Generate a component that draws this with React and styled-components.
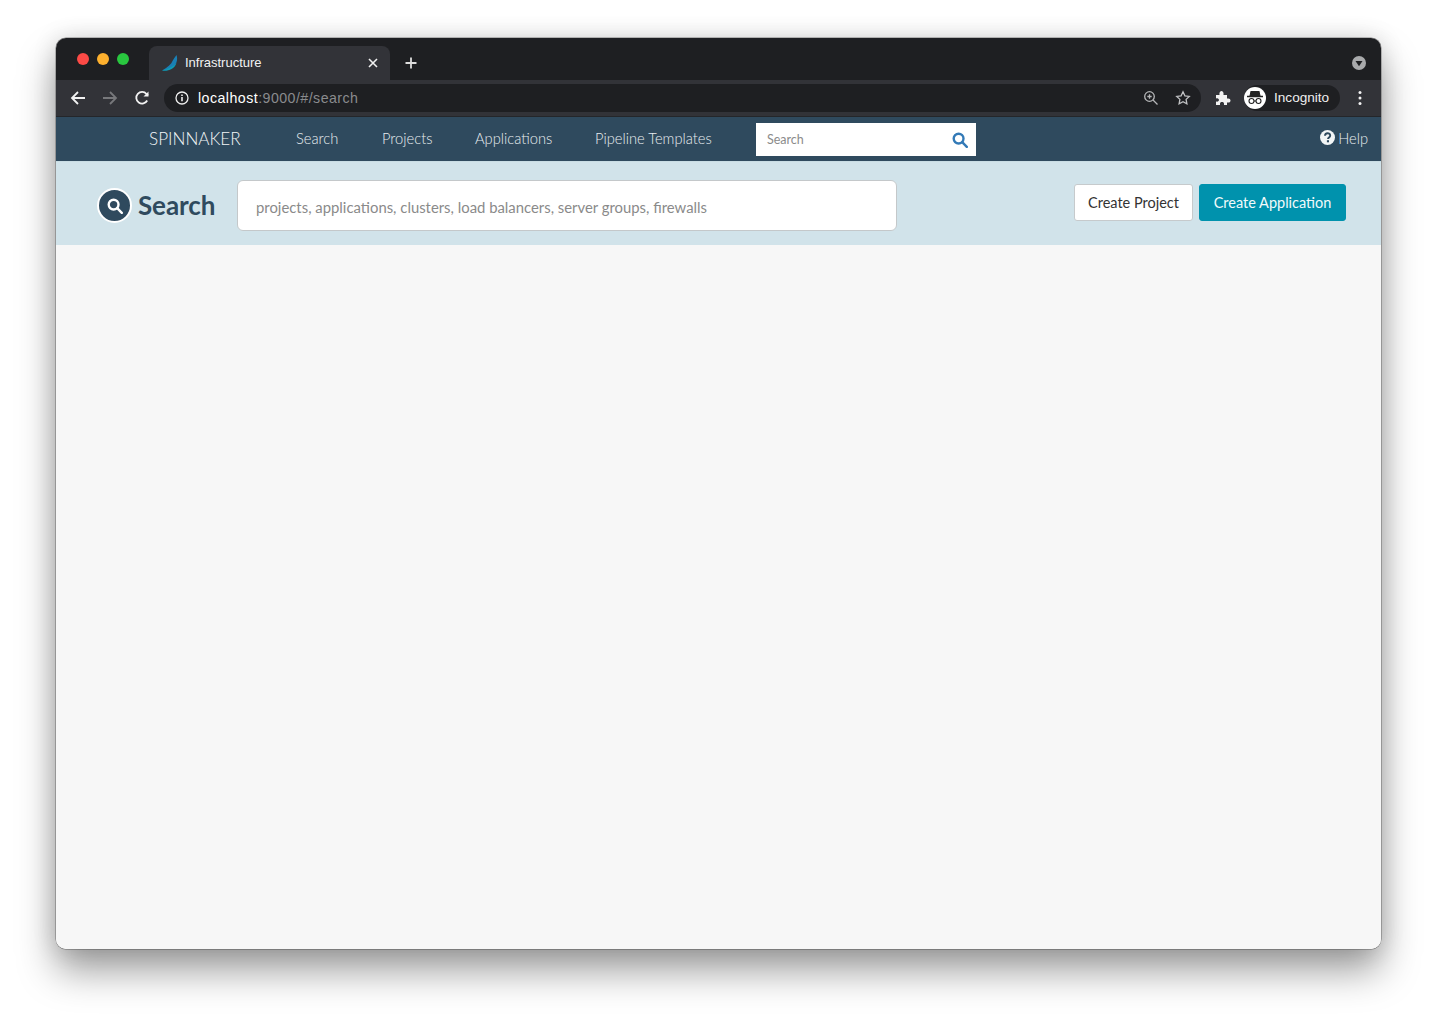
import React from 'react';
import styled, { createGlobalStyle } from 'styled-components';

const Global = createGlobalStyle`
  html, body { margin: 0; padding: 0; background: #fff; }
  body { width: 1437px; height: 1023px; overflow: hidden; font-family: "Lato", "Liberation Sans", sans-serif; }
  * { box-sizing: border-box; }
`;
const Stage = styled.div`padding: 38px 56px 0;`;
const Window = styled.div`
  width: 1325px; height: 911px; border-radius: 10px; overflow: hidden;
  background: #f7f7f7; display: flex; flex-direction: column;
  box-shadow: 0 0 0 .5px rgba(0,0,0,.45), 0 22px 38px rgba(0,0,0,.38), 0 0 24px rgba(0,0,0,.14);
`;
const TitleBar = styled.div`
  height: 42px; background: #1e1f22; display: flex; align-items: flex-end; padding-left: 21px; flex: none;
`;
const Dots = styled.div`display: flex; gap: 8px; align-self: flex-start; margin-top: 15px; width: 72px;`;
const Dot = styled.span`width: 12px; height: 12px; border-radius: 50%; background: ${p => p.$c};`;
const Tab = styled.div`
  width: 241px; height: 34px; background: #323338; border-radius: 8px 8px 0 0; display: flex; align-items: center;
  padding: 0 12px 1px 13px; color: #f1f1f2; font: 13px "Liberation Sans", sans-serif;
`;
const TabTitle = styled.span`margin-left: 7px; flex: 1; letter-spacing: 0;`;
const NewTab = styled.div`margin: 0 0 10px 14px; width: 14px; height: 14px; display: flex;`;
const TabMenu = styled.div`margin: 0 15px 10px auto; width: 14px; height: 14px; display: flex;`;
const Toolbar = styled.div`
  height: 37px; background: #323338; display: flex; align-items: center; flex: none; border-bottom: 1px solid #24262a;
  padding: 0 0 1px 14px;
`;
const NavIcon = styled.div`width: 16px; height: 16px; display: flex; margin-right: ${p => p.$mr}px;`;
const Omnibox = styled.div`
  width: 1037px; height: 28px; margin-left: 14px; border-radius: 14px; background: #1e1f22; display: flex; align-items: center;
  padding: 0 10px 0 11px; font: 14.2px "Liberation Sans", sans-serif; color: #fff;
`;
const Host = styled.span`margin-left: 9px; flex: 1; color: #fff; letter-spacing: .46px;`;
const Rest = styled.span`color: #8a8b8e;`;
const OmniIcon = styled.div`width: 16px; height: 16px; display: flex; margin-left: ${p => p.$ml || 16}px;`;
const Ext = styled.div`width: 16px; height: 16px; display: flex; margin-left: 14px;`;
const Profile = styled.div`
  width: 96px; height: 26px; margin-left: 13px; border-radius: 13px; background: #1e1f22; display: flex; align-items: center;
  padding-left: 0; color: #eee; font: 13.6px "Liberation Sans", sans-serif;
`;
const Avatar = styled.div`width: 22px; height: 22px; border-radius: 50%; background: #fff; display: flex; align-items: center; justify-content: center; margin-right: 8px;`;
const More = styled.div`width: 16px; height: 16px; margin-left: 12px; display: flex;`;
const Nav = styled.nav`
  height: 44px; background: #2f4a5e; display: flex; align-items: center; flex: none; color: #e8edf0;
  padding: 0 13px 0 93px; font-size: 14.7px; font-weight: 300;
`;
const Brand = styled.div`font-size: 17.1px; width: 147px; font-weight: 300; color: #f2f5f6; margin-top: -1px;`;
const NavLink = styled.a`width: ${p => p.$w}px; color: #e8edf0; margin-top: -2px;`;
const NavSearch = styled.div`
  width: 220px; height: 33px; margin-top: 1px; background: #fff; display: flex; align-items: center; justify-content: space-between;
  padding: 0 8px 0 11px; color: #8b8b8b; font-size: 12.5px; font-weight: 400;
`;
const Help = styled.div`margin-left: auto; display: flex; align-items: center; gap: 3px; color: #e8edf0; margin-top: -2px;`;
const HelpIcon = styled.svg`margin-top: -2px;`;
const Header = styled.div`
  height: 84px; background: #d1e3ea; display: flex; align-items: center; flex: none; padding: 4px 35px 0 41px; border-top: 1px solid #c9dde4;
`;
const Badge = styled.div`
  width: 35px; height: 35px; border-radius: 50%; background: #2f4a5e; border: 2px solid #fff; display: flex; align-items: center; justify-content: center;
`;
const Title = styled.h1`
  margin: -2px 0 0 6px; width: 99px; color: #2f4a5e; font-size: 26px; font-weight: 700; letter-spacing: -.1px; line-height: 1;
`;
const SearchBox = styled.div`
  width: 660px; height: 51px; background: #fff; border: 1px solid #c4c8ca; border-radius: 6px; display: flex; align-items: center;
  padding: 2px 18px 0; color: #8a8a8a; font-size: 14.87px; white-space: nowrap;
`;
const Actions = styled.div`margin: 0 0 6px auto; display: flex; gap: 6px;`;
const Button = styled.button`
  height: 37px; border-radius: 3px; font: 400 14.5px "Lato", sans-serif; padding: 0; width: ${p => p.$w}px;
  background: ${p => p.$primary ? '#0092ad' : '#fff'}; color: ${p => p.$primary ? '#f2fafb' : '#333'};
  border: 1px solid ${p => p.$primary ? '#0092ad' : '#c6cacc'};
`;
const Content = styled.main`flex: 1; background: #f7f7f7;`;

const Mag = ({ size, color, sw = 3 }) => (
  <svg width={size} height={size} viewBox="0 0 16 16" fill="none" stroke={color} strokeWidth={sw}>
    <circle cx="6.6" cy="6.6" r="4.9" /><path d="M10.2 10.2l4.6 4.6" strokeLinecap="round" />
  </svg>
);

export default function App() {
  return (
    <>
      <Global />
      <Stage>
        <Window>
          <TitleBar>
            <Dots><Dot $c="#fc4a46" /><Dot $c="#fdb02e" /><Dot $c="#29c73f" /></Dots>
            <Tab>
              <svg width="16" height="16" viewBox="0 0 16 16">
                <path d="M14.500 0C16.500 6 14 14 0 15.500 C6 12 9.500 9 10.500 6 C11.500 4 13 2 14.500 0z" fill="#1a7fb5" />
                <path d="M0 15.500 C5 16.500 12 15 14.500 8 C12 11 7 13.500 0 15.500z" fill="#0e9bb5" />
              </svg>
              <TabTitle>Infrastructure</TabTitle>
              <svg width="10" height="10" viewBox="0 0 10 10" stroke="#f0f0f0" strokeWidth="1.600"><path d="M1 1l8 8M9 1l-8 8" /></svg>
            </Tab>
            <NewTab><svg width="14" height="14" viewBox="0 0 14 14" stroke="#ddd" strokeWidth="1.800"><path d="M7 1.500v11M1.500 7h11" /></svg></NewTab>
            <TabMenu>
              <svg width="14" height="14" viewBox="0 0 14 14"><circle cx="7" cy="7" r="7" fill="#a9aaac" /><path d="M3.500 5h7L7 10.200z" fill="#1e1f22" /></svg>
            </TabMenu>
          </TitleBar>
          <Toolbar>
            <NavIcon $mr={16}><svg width="16" height="16" viewBox="0 0 16 16" fill="none" stroke="#f2f2f2" strokeWidth="1.800"><path d="M15 8H2M8 2L2 8l6 6" /></svg></NavIcon>
            <NavIcon $mr={16}><svg width="16" height="16" viewBox="0 0 16 16" fill="none" stroke="#77787b" strokeWidth="1.800"><path d="M1 8h13M8 2l6 6-6 6" /></svg></NavIcon>
            <NavIcon $mr={0}><svg width="16" height="16" viewBox="0 0 16 16" fill="none" stroke="#f2f2f2" strokeWidth="1.800"><path d="M13.200 10.500A5.800 5.800 0 1 1 12.500 4L14 5.500" /><path d="M14.500 1.500v5h-5" fill="#f2f2f2" stroke="none" /></svg></NavIcon>
            <Omnibox>
              <svg width="14" height="14" viewBox="0 0 14 14" fill="none" stroke="#eee" strokeWidth="1.300"><circle cx="7" cy="7" r="6" /><path d="M7 6v4.200" strokeWidth="1.600" /><path d="M7 3.400v1.500" strokeWidth="1.600" /></svg>
              <Host>localhost<Rest>:9000/#/search</Rest></Host>
              <OmniIcon>
                <svg width="16" height="16" viewBox="0 0 16 16" fill="none" stroke="#b5b6b8" strokeWidth="1.300"><circle cx="6.500" cy="6.500" r="4.800" /><path d="M10 10l4.500 4.500M6.500 4.300v4.400M4.300 6.500h4.400" /></svg>
              </OmniIcon>
              <OmniIcon>
                <svg width="16" height="16" viewBox="0 0 16 16" fill="none" stroke="#c0c1c3" strokeWidth="1.300"><path d="M8 1.800l1.900 4 4.400.6-3.200 3 .8 4.400L8 11.700 4.100 13.800l.8-4.400-3.200-3 4.400-.6z" /></svg>
              </OmniIcon>
            </Omnibox>
            <Ext>
              <svg width="16" height="16" viewBox="0 0 16 16" fill="#f2f2f2"><path d="M1 5h3.500C4 2 5.500 1 6.500 1S9 2 8.500 5H12v3.500c3-.5 3.500 1 3.500 2S15 13 12 12.500V15H9c.5-2.500-1-3-2-3s-2.500.5-2 3H1v-3.500c2 .5 3-.5 3-1.500S3 7.500 1 8.500z" /></svg>
            </Ext>
            <Profile>
              <Avatar>
                <svg width="18" height="16" viewBox="0 0 18 16" fill="none" stroke="#222" strokeWidth="1.100">
                  <path d="M4 6l1-4.500h8L14 6z" fill="#222" /><path d="M1 6.500h16" strokeWidth="1.300" />
                  <circle cx="5.500" cy="11" r="2.500" /><circle cx="12.500" cy="11" r="2.500" /><path d="M8 11h2" />
                </svg>
              </Avatar>
              Incognito
            </Profile>
            <More><svg width="16" height="16" viewBox="0 0 16 16" fill="#f2f2f2"><circle cx="8" cy="2.500" r="1.500" /><circle cx="8" cy="8" r="1.500" /><circle cx="8" cy="13.500" r="1.500" /></svg></More>
          </Toolbar>
          <Nav>
            <Brand>SPINNAKER</Brand>
            <NavLink $w={86}>Search</NavLink>
            <NavLink $w={93}>Projects</NavLink>
            <NavLink $w={120}>Applications</NavLink>
            <NavLink $w={161}>Pipeline Templates</NavLink>
            <NavSearch>Search<Mag size={16} color="#337ab7" sw={2.400} /></NavSearch>
            <Help>
              <HelpIcon width="15" height="15" viewBox="0 0 15 15">
                <circle cx="7.500" cy="7.500" r="7.500" fill="#f2f5f6" />
                <path d="M5 5.800c0-3.300 5.200-3.300 5.200-.2 0 2-2.200 1.800-2.200 3.500" fill="none" stroke="#2f4a5e" strokeWidth="1.900" />
                <rect x="6.900" y="10.200" width="2.100" height="2.100" fill="#2f4a5e" />
              </HelpIcon>
              Help
            </Help>
          </Nav>
          <Header>
            <Badge><Mag size={16} color="#fff" sw={2.400} /></Badge>
            <Title>Search</Title>
            <SearchBox>projects, applications, clusters, load balancers, server groups, firewalls</SearchBox>
            <Actions>
              <Button $w={119}>Create Project</Button>
              <Button $w={147} $primary>Create Application</Button>
            </Actions>
          </Header>
          <Content />
        </Window>
      </Stage>
    </>
  );
}
